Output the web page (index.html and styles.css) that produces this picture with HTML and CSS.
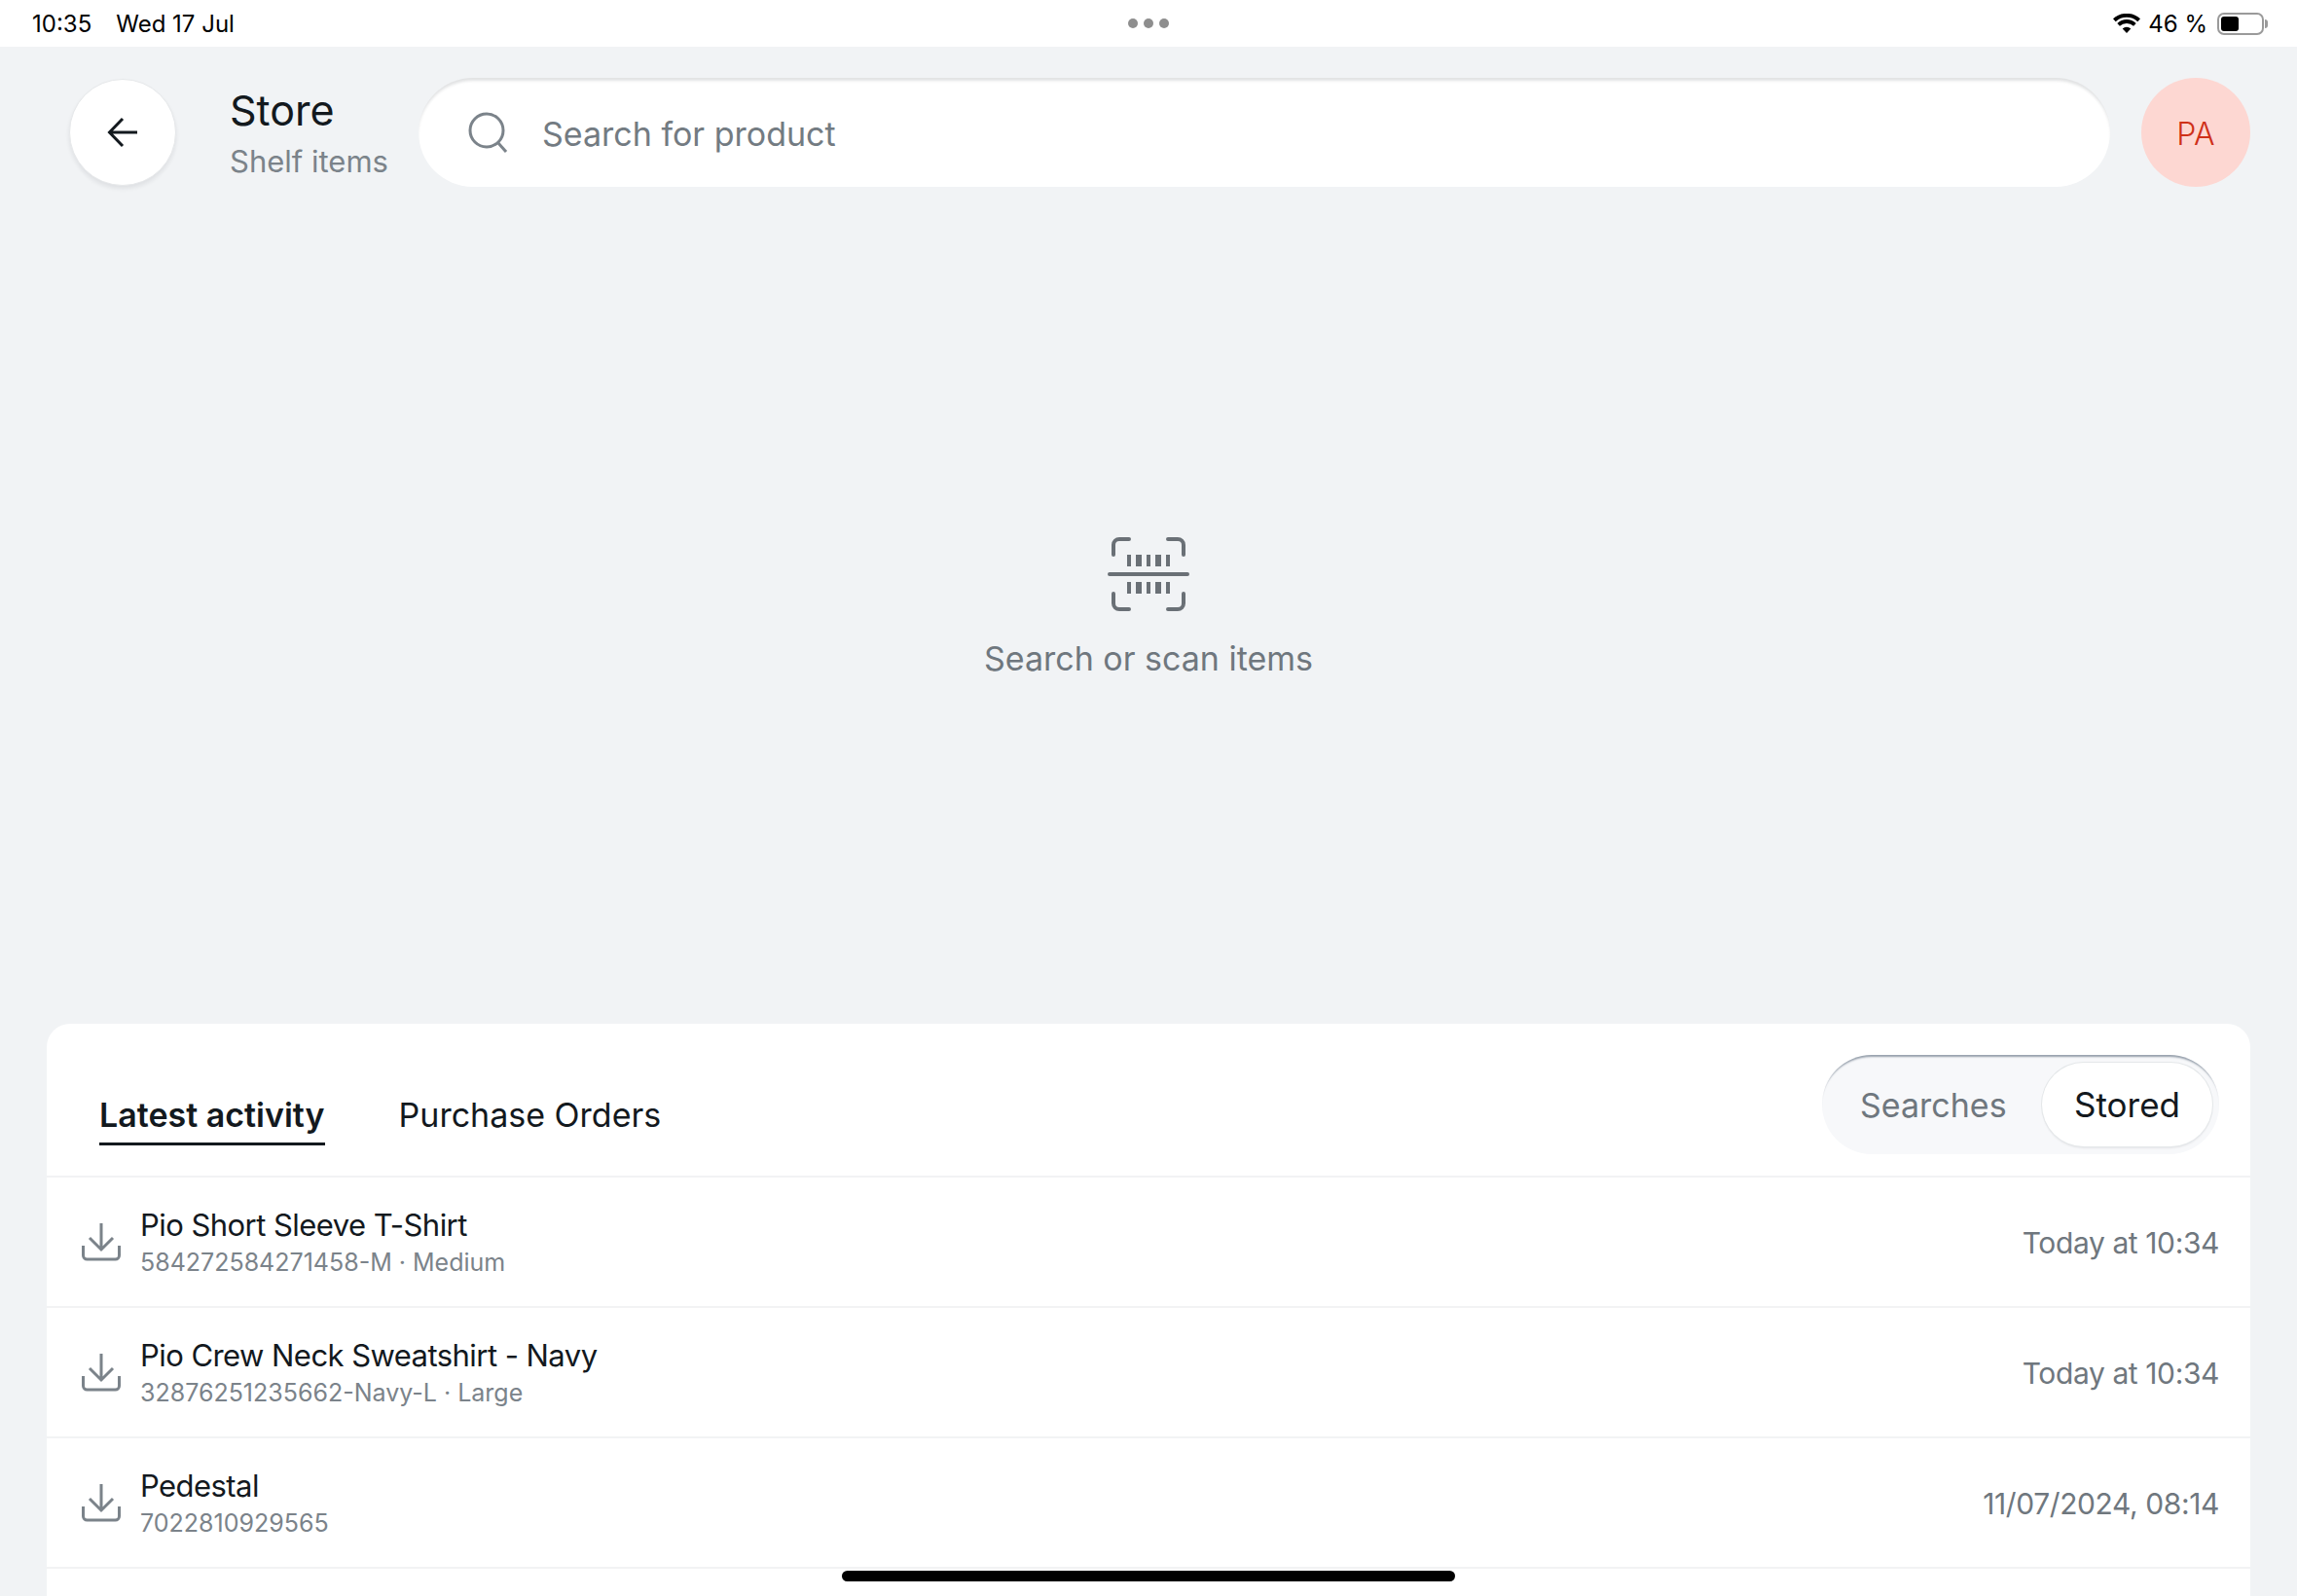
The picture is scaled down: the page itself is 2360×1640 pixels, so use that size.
FILE: index.html
```html
<!DOCTYPE html>
<html lang="en">
<head>
<meta charset="utf-8">
<title>Store - Shelf items</title>
<link rel="stylesheet" href="styles.css">
</head>
<body>
<div class="app">
  <div class="status">
    <div class="status-left"><span>10:35</span><span>Wed 17 Jul</span></div>
    <div class="status-right">
      <svg class="wifi" viewBox="0 0 28 20"><path d="M14 20l-4.300-4.600a6.300 6.300 0 0 1 8.600 0zM6.900 12.700l-2.600-2.800a14.300 14.300 0 0 1 19.400 0l-2.600 2.800a10.500 10.500 0 0 0-14.200 0zM2.700 8.200L0 5.300a20.700 20.700 0 0 1 28 0l-2.700 2.900a16.800 16.800 0 0 0-22.600 0z"/></svg>
      <span class="pct">46 %</span>
      <span class="battery"><span class="battery-fill"></span></span><span class="battery-nub"></span>
    </div>
    <div class="dots"><i></i><i></i><i></i></div>
  </div>

  <header class="top">
    <button class="back" type="button" aria-label="Back">
      <svg viewBox="0 0 32 32" width="32" height="32"><path d="M31 16H3M16 2L2.500 16 16 30" fill="none" stroke="#13191e" stroke-width="3"/></svg>
    </button>
    <div class="titles">
      <div class="title">Store</div>
      <div class="subtitle">Shelf items</div>
    </div>
    <div class="search">
      <svg class="search-icon" viewBox="0 0 42 42" width="42" height="42"><circle cx="20" cy="19" r="17" fill="none" stroke="#7b838a" stroke-width="3"/><path d="M31.500 31.500L40 41" fill="none" stroke="#7b838a" stroke-width="3"/></svg>
      <span class="placeholder">Search for product</span>
    </div>
    <div class="avatar">PA</div>
  </header>

  <main class="empty">
    <svg class="scan" viewBox="0 0 84 76" width="84" height="76">
      <g fill="none" stroke="#6a7076" stroke-width="4" stroke-linecap="round">
        <path d="M6 18V8a6 6 0 0 1 6-6h10M62 2h10a6 6 0 0 1 6 6v10M6 58v10a6 6 0 0 0 6 6h10M62 74h10a6 6 0 0 0 6-6V58M2 38h80"/>
      </g>
      <g fill="#6a7076">
        <rect x="20" y="18" width="4" height="12"/><rect x="29" y="18" width="6" height="12"/><rect x="40" y="18" width="4" height="12"/><rect x="49" y="18" width="6" height="12"/><rect x="60" y="18" width="4" height="12"/>
        <rect x="20" y="46" width="4" height="12"/><rect x="29" y="46" width="6" height="12"/><rect x="40" y="46" width="4" height="12"/><rect x="49" y="46" width="6" height="12"/><rect x="60" y="46" width="4" height="12"/>
      </g>
    </svg>
    <div class="empty-text">Search or scan items</div>
  </main>

  <section class="card">
    <div class="card-head">
      <nav class="tabs">
        <span class="tab tab-active">Latest activity</span>
        <span class="tab">Purchase Orders</span>
      </nav>
      <div class="segment">
        <span class="seg">Searches</span>
        <span class="seg seg-on">Stored</span>
      </div>
    </div>
    <div class="row">
      <svg class="dl" viewBox="0 0 40 40" width="40" height="40"><path d="M20 1v27M8 16l12 12 12-12M1.500 24v10a4 4 0 0 0 4 4h29a4 4 0 0 0 4-4V24" fill="none" stroke="#7b838a" stroke-width="3"/></svg>
      <div class="row-main"><div class="row-name">Pio Short Sleeve T-Shirt</div><div class="row-sub">584272584271458-M · Medium</div></div>
      <div class="row-time">Today at 10:34</div>
    </div>
    <div class="row">
      <svg class="dl" viewBox="0 0 40 40" width="40" height="40"><path d="M20 1v27M8 16l12 12 12-12M1.500 24v10a4 4 0 0 0 4 4h29a4 4 0 0 0 4-4V24" fill="none" stroke="#7b838a" stroke-width="3"/></svg>
      <div class="row-main"><div class="row-name">Pio Crew Neck Sweatshirt - Navy</div><div class="row-sub">32876251235662-Navy-L · Large</div></div>
      <div class="row-time">Today at 10:34</div>
    </div>
    <div class="row">
      <svg class="dl" viewBox="0 0 40 40" width="40" height="40"><path d="M20 1v27M8 16l12 12 12-12M1.500 24v10a4 4 0 0 0 4 4h29a4 4 0 0 0 4-4V24" fill="none" stroke="#7b838a" stroke-width="3"/></svg>
      <div class="row-main"><div class="row-name">Pedestal</div><div class="row-sub">7022810929565</div></div>
      <div class="row-time">11/07/2024, 08:14</div>
    </div>
    <div class="row-end"></div>
  </section>
  <div class="home"></div>
</div>
</body>
</html>
```

FILE: styles.css
```css
* { box-sizing: border-box; }
html, body { margin: 0; padding: 0; }
body { background: #f1f3f5; font-family: "Inter", "Liberation Sans", sans-serif; color: #13191e; }
.app { position: relative; width: 2360px; height: 1640px; overflow: hidden; display: flex; flex-direction: column; }

.status { position: relative; height: 48px; flex: none; background: #fff; display: flex; align-items: center; justify-content: space-between; padding: 0 30px 0 33px; font-size: 24px; color: #000; }
.status-left { display: flex; gap: 25px; }
.status-right { display: flex; align-items: center; }
.wifi { width: 28px; height: 20px; fill: #000; margin-right: 8px; }
.pct { margin-right: 10px; }
.battery { width: 48px; height: 23px; border: 2px solid #9a9a9a; border-radius: 7px; padding: 2px; display: block; }
.battery-fill { display: block; width: 18px; height: 100%; background: #000; border-radius: 3px; }
.battery-nub { width: 3px; height: 9px; background: #9a9a9a; border-radius: 0 3px 3px 0; margin-left: 1px; }
.dots { position: absolute; left: 1159px; top: 19px; display: flex; gap: 6px; }
.dots i { width: 10px; height: 10px; border-radius: 50%; background: #8e8e8e; }

.top { flex: none; display: flex; align-items: center; height: 112px; margin-top: 32px; padding: 0 48px 0 71px; }
.back { width: 110px; height: 110px; border-radius: 50%; border: 1px solid #e6e8ea; background: #fff; box-shadow: 0 3px 4px rgba(20, 30, 40, .08); display: flex; align-items: center; justify-content: center; padding: 0; }
.titles { margin-left: 55px; width: 194px; flex: none; }
.title { font-size: 43px; line-height: 54px; margin-top: 1px; }
.subtitle { font-size: 31px; line-height: 44px; margin-top: 4px; color: #7b838a; }
.search { flex: 1; height: 112px; background: #fff; border-radius: 56px; box-shadow: inset 0 4px 3px -1px rgba(20, 30, 40, .13); display: flex; align-items: center; padding-left: 50px; }
.search-icon { flex: none; }
.placeholder { margin-left: 35px; font-size: 34px; color: #737b82; position: relative; top: 1px; }
.avatar { width: 112px; height: 112px; margin-left: 32px; padding-top: 2px; flex: none; border-radius: 50%; background: #fdd7d2; color: #cf3019; font-size: 32px; font-weight: 300; display: flex; align-items: center; justify-content: center; }

.empty { flex: 1; display: flex; flex-direction: column; align-items: center; justify-content: center; padding-top: 8px; }
.scan { display: block; }
.empty-text { margin-top: 26px; font-size: 34px; line-height: 46px; color: #6f777e; }

.card { flex: none; height: 588px; margin: 0 48px; background: #fff; border-radius: 24px 24px 0 0; }
.card-head { height: 156px; display: flex; justify-content: space-between; padding: 32px 32px 0 54px; }
.tabs { display: flex; gap: 76px; padding-top: 32px; align-items: flex-start; }
.tab { font-size: 34px; line-height: 60px; height: 61px; }
.tab-active { font-weight: 600; border-bottom: 3px solid #13191e; }
.segment { width: 408px; height: 102px; background: #f7f8fa; border-radius: 51px; box-shadow: inset 0 4px 2px -2px rgba(70, 85, 105, .55); display: flex; align-items: center; justify-content: space-between; padding: 0 7px 0 39px; font-size: 34px; color: #6f777e; }
.seg-on { width: 175px; height: 86px; border-radius: 43px; background: #fff; color: #13191e; font-size: 35px; box-shadow: 0 0 0 1px #e4e7e9, 0 2px 2px rgba(20, 30, 40, .08); display: flex; align-items: center; justify-content: center; }

.row { height: 134px; border-top: 2px solid #f2f3f4; display: flex; align-items: center; padding: 0 32px 0 36px; }
.row-end { border-top: 2px solid #f2f3f4; }
.row-main { flex: 1; margin-left: 20px; }
.dl { flex: none; }
.row-name { font-size: 31px; line-height: 42px; letter-spacing: -.55px; }
.row-sub { font-size: 25px; line-height: 34px; color: #7b838a; }
.row-time { font-size: 30px; letter-spacing: -.4px; padding-top: 2px; color: #6f777e; }

.home { position: absolute; left: 865px; top: 1614px; width: 630px; height: 11px; border-radius: 6px; background: #000; }
```
